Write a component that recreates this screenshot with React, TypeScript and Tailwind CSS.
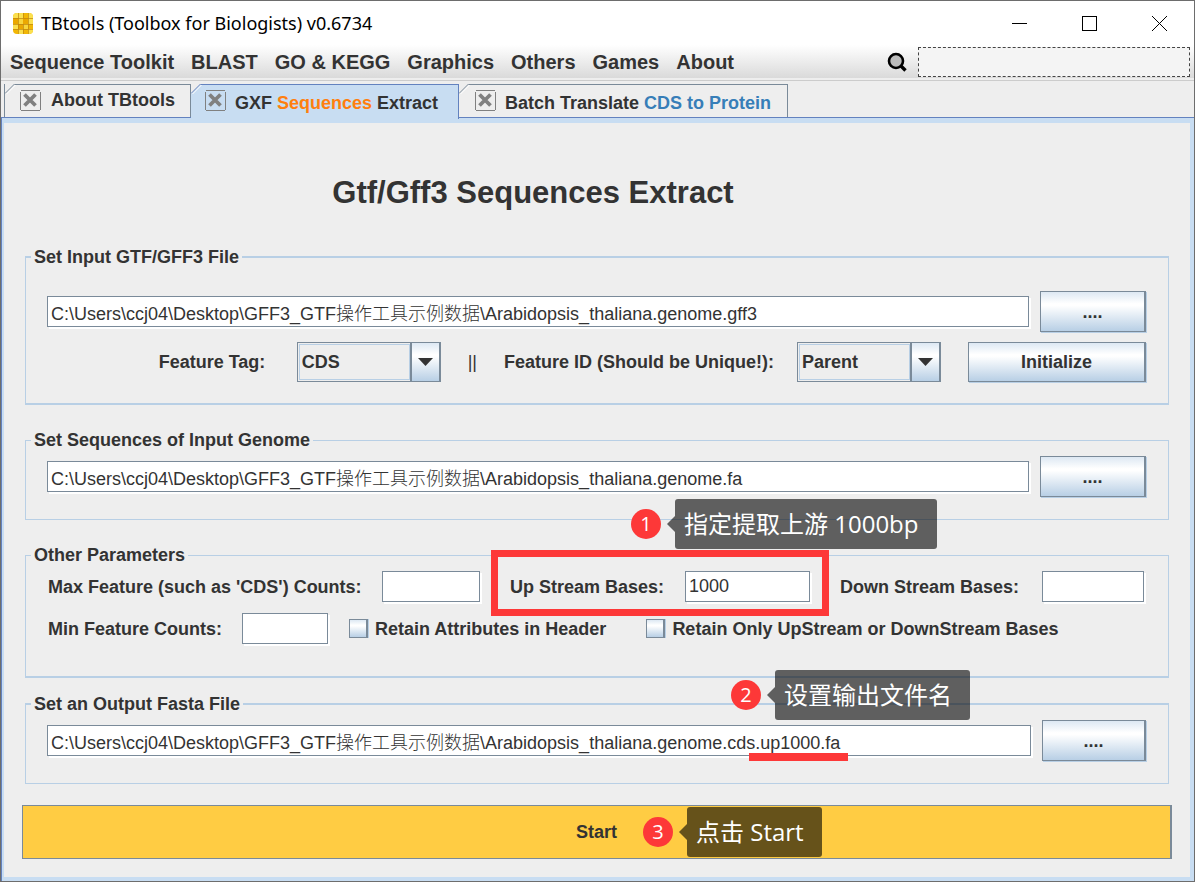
import { useState } from "react";
import type { ReactNode } from "react";
import clsx from "clsx";

const MENUS = ["Sequence Toolkit", "BLAST", "GO & KEGG", "Graphics", "Others", "Games", "About"];
const DATA_DIR = "C:\\Users\\ccj04\\Desktop\\GFF3_GTF操作工具示例数据\\";

// Swing "Metal" gradient shared by buttons, combo arrows and tick boxes
const METAL = "bg-[linear-gradient(#dde8f3_0%,#ffffff_30%,#ffffff_35%,#b8cfe5_100%)]";

function AppIcon() {
  return (
    <svg width="20" height="21" viewBox="0 0 20 21" aria-hidden="true">
      <rect width="20" height="21" rx="4" fill="#f2b705" />
      <path d="M4 0H5V5H0V4Q0 0 4 0ZM5 0H10V5H5ZM15 5H20V11H15ZM0 11H5V16H0ZM5 16H10V21H5ZM15 16H20V17Q20 21 16 21H15ZM15 0H16Q20 0 20 4V5H15Z" fill="#fbe04f" />
      <path d="M10 5H15V11H10ZM5 11H10V16H5ZM0 5H5V11H0Z" fill="#eba800" />
      <path d="M5 5H10V11H5ZM10 11H15V16H10Z" fill="#f8d63c" />
      <path d="M5.5 0V21M10.5 0V5M10.5 11V21M15.5 0V21M0 5.5H20M0 11.5H20M0 16.5H20" stroke="#bd8410" strokeWidth="1" strokeOpacity=".7" />
    </svg>
  );
}

function TitleBar() {
  return (
    <header className="flex h-11 items-center bg-white pl-3">
      <AppIcon />
      <h1 className="ml-2 flex-1 font-['Noto_Sans','Open_Sans',sans-serif] text-[18px] leading-6 text-black">
        TBtools (Toolbox for Biologists) v0.6734
      </h1>
      <button type="button" aria-label="Minimize" className="flex h-full w-[70px] items-center justify-center">
        <svg width="15" height="15" viewBox="0 0 15 15"><path d="M0 7.5H15" stroke="#000" /></svg>
      </button>
      <button type="button" aria-label="Maximize" className="flex h-full w-[70px] items-center justify-center">
        <svg width="15" height="15" viewBox="0 0 15 15"><rect x=".5" y=".5" width="14" height="14" fill="none" stroke="#000" /></svg>
      </button>
      <button type="button" aria-label="Close" className="flex h-full w-[70px] items-center justify-center">
        <svg width="15" height="15" viewBox="0 0 15 15"><path d="M0 0L15 15M15 0L0 15" stroke="#000" /></svg>
      </button>
    </header>
  );
}

function MenuBar() {
  return (
    <nav className="flex h-[33px] items-center bg-linear-to-b from-white to-[#dadada] pr-1 pl-[9px]">
      <div className="flex flex-1 gap-[17px] text-[20px] leading-6 font-bold">
        {MENUS.map((m) => (
          <button key={m} type="button">{m}</button>
        ))}
      </div>
      <label htmlFor="menu-search" aria-label="Search" className="mr-[11px]">
        <svg width="20" height="20" viewBox="0 0 20 20">
          <circle cx="9" cy="9" r="7" fill="#bcbcbc" stroke="#000" strokeWidth="2.6" />
          <path d="M13.5 13.5L18.5 18.5" stroke="#000" strokeWidth="3.4" />
        </svg>
      </label>
      <input id="menu-search" type="text" className="h-[30px] w-[272px] border border-dashed border-[#444444] bg-[#f4f4f4] px-1 text-[18px]" />
    </nav>
  );
}

function CloseBox() {
  return (
    <svg width="21" height="21" viewBox="0 0 21 21" className="shrink-0" aria-hidden="true">
      <path d="M1 .5H20M1 20.5H20M.5 2V20M20.5 2V20" stroke="#808080" fill="none" />
      <path d="M4.5 4.5L15.5 15.5M15.5 4.5L4.5 15.5" stroke="#808080" strokeWidth="3.8" />
    </svg>
  );
}

type TabProps = { selected?: boolean; className?: string; onSelect: () => void; children: ReactNode };

function Tab({ selected, className, onSelect, children }: TabProps) {
  return (
    <button
      type="button"
      role="tab"
      aria-selected={!!selected}
      onClick={onSelect}
      className={clsx(
        "relative flex items-start border-t border-r text-[18px] leading-5 font-bold whitespace-nowrap",
        selected ? "z-10 h-[35px] border-[#6382bf] bg-[#c8ddf2]" : "h-[33px] border-[#7a8a99] bg-[#eeeeee]",
        className,
      )}
    >
      {/* chamfered top-left corner */}
      <svg width="11" height="11" viewBox="0 0 11 11" className="absolute -top-px left-0" aria-hidden="true">
        <path d="M0 0H10L0 10Z" fill="#eeeeee" />
        <path d="M0 9.5L9.5 0" stroke={selected ? "#6382bf" : "#7a8a99"} />
        <path d="M1.5 10L10.5 1" stroke="#ffffff" />
      </svg>
      {children}
    </button>
  );
}

function TabStrip() {
  const [tab, setTab] = useState(1);
  return (
    <div role="tablist" className="flex h-[33px] items-start bg-[#eeeeee] pl-[3px]">
      <Tab selected={tab === 0} onSelect={() => setTab(0)} className="w-[187px] border-l pt-[5px] pl-[15px]">
        <CloseBox />
        <span className="ml-[10px]">About TBtools</span>
      </Tab>
      <Tab selected={tab === 1} onSelect={() => setTab(1)} className="w-[268px] pt-[5px] pl-[14px]">
        <CloseBox />
        <span className="mt-[3px] ml-[9px]">GXF <span className="text-[#ff7f0e]">Sequences</span> Extract</span>
      </Tab>
      <Tab selected={tab === 2} onSelect={() => setTab(2)} className="w-[329px] pt-[5px] pl-4">
        <CloseBox />
        <span className="mt-[3px] ml-[9px]">Batch Translate <span className="text-[#377eb8]">CDS to Protein</span></span>
      </Tab>
    </div>
  );
}

function Group({ title, className, children }: { title: string; className: string; children: ReactNode }) {
  return (
    <fieldset className={clsx("min-w-0 border-[#b8cfe5] pr-[22px] pl-[21px]", className)}>
      <legend className="-ml-4 px-[3px] text-[18px] leading-5 font-bold">{title}</legend>
      {children}
    </fieldset>
  );
}

function TextBox({ id, label, value = "", className }: { id: string; label?: string; value?: string; className: string }) {
  return (
    <input
      id={id}
      type="text"
      aria-label={label}
      defaultValue={value}
      className={clsx(
        "h-[31px] min-w-0 border border-[#7a8a99] bg-white px-[3px] text-[18px] leading-5 font-light shadow-[2px_2px_0_#ffffff] outline-none",
        className,
      )}
    />
  );
}

function MetalButton({ label, className, children }: { label?: string; className: string; children: ReactNode }) {
  return (
    <button
      type="button"
      aria-label={label}
      className={clsx("shrink-0 border border-r-2 border-[#7a8a99] text-[18px] leading-5 font-bold shadow-[1px_1px_0_#b8cfe5]", METAL, className)}
    >
      {children}
    </button>
  );
}

function Combo({ id, options }: { id: string; options: string[] }) {
  return (
    <div className="relative w-36 shrink-0">
      <select
        id={id}
        className="h-10 w-full appearance-none border border-r-2 border-[#7a8a99] bg-[#eeeeee] pl-1 text-[18px] leading-5 font-bold outline-none"
      >
        {options.map((o) => (
          <option key={o}>{o}</option>
        ))}
      </select>
      <span className="pointer-events-none absolute inset-y-[2px] right-[31px] left-[2px] border border-[#b8cfe5]" />
      <span className={clsx("pointer-events-none absolute inset-y-px right-[2px] flex w-[29px] items-center justify-center border-l-2 border-[#7a8a99]", METAL)}>
        <svg width="15" height="8" viewBox="0 0 15 8"><path d="M0 0H15L7.5 8Z" fill="#333333" /></svg>
      </span>
    </div>
  );
}

function TickBox({ id, children }: { id: string; children: ReactNode }) {
  return (
    <label htmlFor={id} className="flex items-center gap-[7px] whitespace-nowrap">
      <input
        id={id}
        type="checkbox"
        className={clsx("h-[19px] w-[19px] shrink-0 appearance-none border border-r-2 border-[#7a8a99] shadow-[1px_0_0_#b8cfe5] checked:shadow-[inset_0_0_0_4px_#b8cfe5]", METAL)}
      />
      {children}
    </label>
  );
}

// Numbered step marker with its speech bubble
function Callout({ step, className, children }: { step: number; className: string; children: ReactNode }) {
  return (
    <div className={clsx("pointer-events-none absolute z-20 flex items-center font-['Open_Sans','Noto_Sans_CJK_SC',sans-serif] font-normal whitespace-nowrap text-white", className)}>
      <span className="flex h-[30px] w-[30px] items-center justify-center rounded-full bg-[#fd3838] text-[20px] leading-6">{step}</span>
      <svg width="8" height="16" viewBox="0 0 8 16" className="ml-[6px]" aria-hidden="true"><path d="M8 0V16L0 8Z" fill="#000" fillOpacity=".6" /></svg>
      <span className="flex h-[50px] items-center rounded-[3px] bg-black/60 pr-[18px] pl-[9px] text-[24px] leading-8">{children}</span>
    </div>
  );
}

export default function App() {
  return (
    <div className="flex min-h-screen flex-col border border-[#6d6d6d] bg-[#eeeeee] font-['Liberation_Sans','Noto_Sans_CJK_SC',sans-serif] text-[#333333]">
      <TitleBar />
      <MenuBar />
      <div className="mt-[2px] mb-[3px] h-px bg-[#cccccc]" />
      <TabStrip />

      <div className="flex flex-1 flex-col border-t border-l border-[#6382bf]">
        <main className="flex-1 border-4 border-t-[5px] border-l-2 border-[#c8ddf2] px-[18px] pb-[18px]">
          <h2 className="pt-[52px] pr-32 text-center text-[31px] leading-9 font-bold">Gtf/Gff3 Sequences Extract</h2>

          <form className="text-[18px] leading-5 font-bold" onSubmit={(e) => e.preventDefault()}>
            <div className="px-[3px] pt-9">
              <Group title="Set Input GTF/GFF3 File" className="border-x border-y-2 pt-6 pb-[21px]">
                <div className="flex items-center gap-[11px]">
                  <TextBox id="gff" label="GTF/GFF3 file" value={DATA_DIR + "Arabidopsis_thaliana.genome.gff3"} className="flex-1" />
                  <MetalButton label="Browse GTF/GFF3 file" className="h-[41px] w-[106px]">....</MetalButton>
                </div>
                <div className="mt-[10px] flex items-center justify-end whitespace-nowrap">
                  <label htmlFor="tag" className="w-[138px]">Feature Tag:</label>
                  <Combo id="tag" options={["CDS", "exon", "gene"]} />
                  <span className="mx-[27px] font-normal">||</span>
                  <label htmlFor="fid" className="w-[293px]">Feature ID (Should be Unique!):</label>
                  <Combo id="fid" options={["Parent", "ID", "Name"]} />
                  <MetalButton className="ml-[27px] h-10 w-[178px]">Initialize</MetalButton>
                </div>
              </Group>

              <Group title="Set Sequences of Input Genome" className="mt-[25px] border pt-[6px] pb-[22px]">
                <div className="flex items-center gap-[11px]">
                  <TextBox id="genome" label="Genome file" value={DATA_DIR + "Arabidopsis_thaliana.genome.fa"} className="flex-1" />
                  <MetalButton label="Browse genome file" className="h-[41px] w-[106px]">....</MetalButton>
                </div>
              </Group>

              <Group title="Other Parameters" className="mt-[25px] border border-b-2 pt-[6px] pb-8">
                <div className="flex items-center pl-px whitespace-nowrap">
                  <label htmlFor="max" className="w-[334px]">Max Feature (such as 'CDS') Counts:</label>
                  <TextBox id="max" className="w-[98px]" />
                  <div className="relative mx-[30px] flex items-center">
                    <label htmlFor="up" className="w-[175px]">Up Stream Bases:</label>
                    <TextBox id="up" value="1000" className="w-[125px]" />
                    <div className="pointer-events-none absolute -inset-x-[19px] -top-[21px] -bottom-[14px] border-[7px] border-[#fd3838]" />
                    <Callout step={1} className="-top-[72px] left-[121px]">指定提取上游 1000bp</Callout>
                  </div>
                  <label htmlFor="down" className="w-[202px]">Down Stream Bases:</label>
                  <TextBox id="down" className="w-[102px]" />
                </div>
                <div className="mt-[11px] flex items-center pl-px whitespace-nowrap">
                  <label htmlFor="min" className="w-[194px]">Min Feature Counts:</label>
                  <TextBox id="min" className="mr-[21px] w-[86px]" />
                  <div className="flex gap-10">
                    <TickBox id="attrs">Retain Attributes in Header</TickBox>
                    <TickBox id="only">Retain Only UpStream or DownStream Bases</TickBox>
                  </div>
                </div>
              </Group>

              <Group title="Set an Output Fasta File" className="mt-4 border border-t-2 pt-[6px] pb-[22px]">
                <div className="relative flex items-center gap-[11px]">
                  <TextBox id="out" label="Output Fasta file" value={DATA_DIR + "Arabidopsis_thaliana.genome.cds.up1000.fa"} className="flex-1" />
                  <MetalButton label="Browse output file" className="h-[41px] w-[104px]">....</MetalButton>
                  <div className="pointer-events-none absolute bottom-0 left-[702px] h-2 w-[99px] bg-[#fd3838]" />
                  <Callout step={2} className="-top-[50px] left-[684px]">设置输出文件名</Callout>
                </div>
              </Group>
            </div>

            <div className="relative mt-[21px]">
              <button type="submit" className="h-[54px] w-full border border-r-2 border-[#7a8a99] bg-[#ffcc43]">Start</button>
              <Callout step={3} className="top-[2px] left-[calc(50%+46px)]">点击 Start</Callout>
            </div>
          </form>
        </main>
      </div>
    </div>
  );
}
